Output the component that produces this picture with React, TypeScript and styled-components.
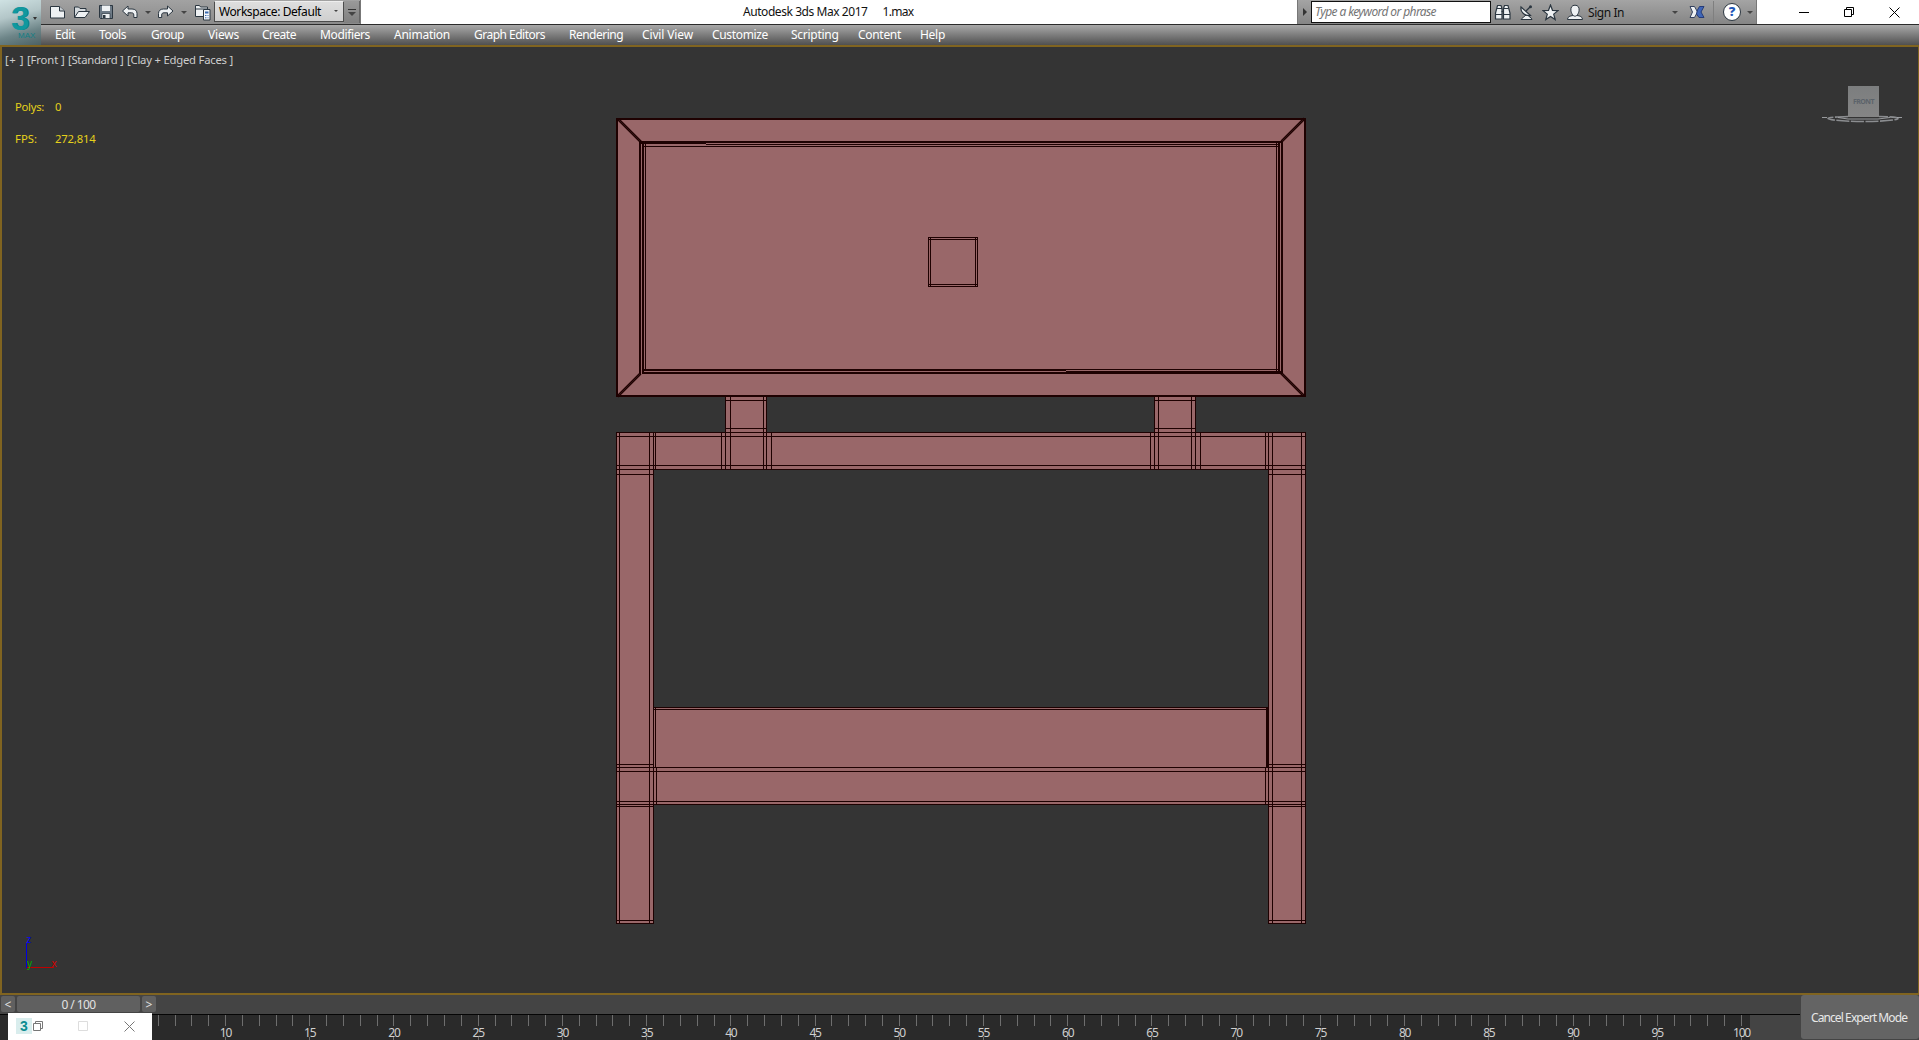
import React, { useLayoutEffect, useRef, useState } from "react";
import styled, { createGlobalStyle } from "styled-components";

const Global = createGlobalStyle`
  * { box-sizing: border-box; }
  html, body { margin: 0; padding: 0; overflow: hidden; background: #444; }
  body { font-family: "Noto Sans", "Open Sans", sans-serif; font-size: 12px; }
  svg { display: block; flex: none; }
`;

const Window = styled.div`
  width: 1919px;
  height: 1040px;
  display: flex;
  flex-direction: column;
  position: relative;
  overflow: hidden;
  background: #444;
`;

/* ---------- text fitted to a given width ---------- */

const FitText = styled.span`
  display: inline-block;
  white-space: pre;
`;

function Fit({ w, children }: { w: number; children: string }) {
  const ref = useRef<HTMLSpanElement>(null);
  const [spacing, setSpacing] = useState(0);
  useLayoutEffect(() => {
    if (ref.current) {
      const natural = ref.current.getBoundingClientRect().width;
      setSpacing((w - natural) / children.length);
    }
  }, []);
  return (
    <FitText ref={ref} style={{ letterSpacing: spacing }}>
      {children}
    </FitText>
  );
}

/* ---------- header ---------- */

const Header = styled.header`
  display: flex;
  height: 45px;
  flex: none;
`;

const AppButton = styled.div`
  width: 41px;
  height: 45px;
  flex: none;
  position: relative;
  background: linear-gradient(165deg, #cfe2e3 0%, #b3c6c8 35%, #6d8588 70%, #4c6164 100%);
`;

const Three = styled.span`
  position: absolute;
  left: 11px;
  top: 0;
  font: 700 33px/37px "Liberation Sans", sans-serif;
  color: #10989f;
  text-shadow: 1px 0 0 #0d7f88;
`;

const MaxTag = styled.span`
  position: absolute;
  left: 18px;
  top: 31px;
  font: 8px/9px "Liberation Sans", sans-serif;
  color: #137f86;
`;

const AppCaret = styled.span`
  position: absolute;
  left: 33px;
  top: 17px;
  border: 2.5px solid transparent;
  border-top: 3px solid #333;
`;

const Bars = styled.div`
  flex: 1;
  display: flex;
  flex-direction: column;
`;

const TitleBar = styled.div`
  height: 24px;
  display: flex;
  background: #fff;
`;

const QuickBar = styled.div`
  width: 320px;
  height: 24px;
  flex: none;
  display: flex;
  align-items: flex-start;
  padding-left: 7px;
  background: linear-gradient(#a2a2a2, #8b8b8b);
  border-right: 1px solid #777;
`;

const Slot = styled.div<{ $w: number }>`
  width: ${(p) => p.$w}px;
  height: 24px;
  flex: none;
  display: flex;
  align-items: center;
`;

const Caret = styled.i<{ $s?: number }>`
  width: 0;
  height: 0;
  border: ${(p) => p.$s ?? 3}px solid transparent;
  border-top-color: #444;
  border-bottom: 0;
`;

const Workspace = styled.div`
  width: 130px;
  height: 21px;
  margin-top: 1px;
  flex: none;
  display: flex;
  align-items: center;
  justify-content: space-between;
  padding: 0 5px 1px 4px;
  background: linear-gradient(#dedede, #cfcfcf);
  border: 1px solid #4c4c4c;
  border-top-color: #eee;
  color: #000;
`;

const Overflow = styled.div`
  width: 17px;
  height: 22px;
  margin-top: 1px;
  display: flex;
  flex-direction: column;
  align-items: center;
  justify-content: center;
  gap: 2px;
  background: linear-gradient(#999, #808080);
  border-right: 1px solid #666;
  &::before { content: ""; width: 8px; height: 1px; background: #333; }
`;

const Title = styled.div`
  flex: 1;
  display: flex;
  gap: 15px;
  padding: 3px 0 0 382px;
  line-height: 17px;
  color: #111;
`;

const InfoCenter = styled.div`
  width: 460px;
  height: 24px;
  flex: none;
  display: flex;
  background: linear-gradient(#a4a4a4, #858585);
  border: 1px solid #777;
  border-width: 0 1px;
`;

const Expand = styled.div`
  width: 13px;
  height: 24px;
  display: flex;
  align-items: center;
  justify-content: center;
  &::before { content: ""; border: 4px solid transparent; border-left: 4px solid #333; border-right: 0; }
`;

const Search = styled.div`
  width: 180px;
  height: 22px;
  margin-top: 1px;
  padding-left: 3px;
  flex: none;
  line-height: 19px;
  border: 1px solid #111;
  background: #fff;
  color: #757575;
  font-style: italic;
`;

const SignIn = styled.div`
  width: 84px;
  line-height: 25px;
  color: #111;
`;

const Divider = styled.div`
  width: 1px;
  height: 22px;
  margin: 1px 9px 0 0;
  background: #7f7f7f;
`;

const Controls = styled.div`
  width: 162px;
  height: 24px;
  display: flex;
  padding-left: 42px;
`;

const MenuBar = styled.nav`
  height: 21px;
  display: flex;
  padding-left: 14px;
  border-top: 1px solid #2b2b2b;
  background: linear-gradient(#a9a9a9, #505050);
  color: #fff;
  line-height: 20px;
`;

const MenuItem = styled.div<{ $w: number }>`
  width: ${(p) => p.$w}px;
  flex: none;
`;

/* ---------- viewport ---------- */

const Viewport = styled.main`
  height: 950px;
  flex: none;
  position: relative;
  border: 2px solid #806420;
  border-right-width: 1px;
  background: #343434;
`;

const ViewLabels = styled.div`
  display: flex;
  padding: 5px 0 0 3px;
  line-height: 16px;
  font-size: 11.3px;
  color: #cdcdcd;
`;

const ViewLabel = styled.div<{ $w: number }>`
  width: ${(p) => p.$w}px;
`;

const Stats = styled.div`
  display: grid;
  grid-template-columns: 40px 60px;
  justify-items: start;
  row-gap: 16px;
  padding: 31px 0 0 13px;
  line-height: 16px;
  font-size: 11.3px;
  color: #e5d11a;
`;

const Overlay = styled.svg<{ $x: number; $y: number }>`
  position: absolute;
  left: ${(p) => p.$x}px;
  top: ${(p) => p.$y}px;
`;

const ViewCube = styled.div`
  position: absolute;
  left: 1846px;
  top: 39px;
  width: 31px;
  height: 31px;
  background: linear-gradient(#7c7e7f, #858585);
  color: #5c636a;
  font: 700 7px/32px "Open Sans", sans-serif;
  text-align: center;
`;

/* ---------- timeline ---------- */

const Timeline = styled.footer`
  height: 45px;
  display: flex;
  background: #444;
`;

const Track = styled.div`
  width: 1800px;
`;

const SliderRow = styled.div`
  height: 19px;
  padding: 1px 0 0 1px;
  display: flex;
  color: #e2e2e2;
`;

const SliderButton = styled.div<{ $w: number; $gap: number }>`
  width: ${(p) => p.$w}px;
  height: 16px;
  margin-right: ${(p) => p.$gap}px;
  border-radius: 2px;
  background: #606060;
  text-align: center;
  line-height: 17px;
`;

const Ruler = styled.div`
  width: 1750px;
  height: 26px;
  display: flex;
  padding-left: 48.7px;
  background: #2a2a2a;
  box-shadow: 50px 0 0 #444;
  position: relative;
  &::before { content: ""; position: absolute; left: 0; top: 0; width: 1800px; height: 1px; background: #050505; }
`;

const Frame = styled.div`
  width: 16.858px;
  flex: none;
  display: flex;
  flex-direction: column;
  align-items: center;
  color: #cfcfcf;
`;

const Tick = styled.i<{ $h: number }>`
  width: 1px;
  height: ${(p) => p.$h}px;
  flex: none;
  background: #6e6e6e;
`;

const FrameNo = styled.span`
  height: 11px;
  line-height: 14px;
`;

const Expert = styled.button`
  width: 118px;
  height: 44px;
  margin: 0 0 0 1px;
  padding: 1px 2px 0 0;
  border: 0;
  border-radius: 3px;
  background: #646464;
  color: #e8e8e8;
  font: 12px "Noto Sans", sans-serif;
`;

const MiniWindow = styled.div`
  position: absolute;
  left: 8px;
  top: 1013px;
  width: 144px;
  height: 27px;
  display: flex;
  padding: 1px 0 0 8px;
  background: #fff;
`;

const MiniLogo = styled.div`
  width: 16px;
  height: 16px;
  background: #d9eded;
  color: #0c8c90;
  text-align: center;
  font: 700 14px/16px "Liberation Sans", sans-serif;
`;

/* ---------- icons ---------- */

const ink = "#2b3640";
const pale = "#eef1f3";

const NewIcon = () => (
  <svg width="18" height="14" viewBox="0 0 18 14">
    <path d="M2.5 1.5h9l5 4.5v7h-14z" fill={pale} stroke={ink} />
    <path d="M11.5 1.5v4.5h5" fill="#c5cbd0" stroke={ink} />
  </svg>
);
const OpenIcon = () => (
  <svg width="18" height="14" viewBox="0 0 18 14">
    <path d="M1.5 12.5v-10.5h4l1.5 1.5h6v3" fill="#d5dade" stroke={ink} />
    <path d="M1.5 12.5l4-6h11l-4.5 6z" fill={pale} stroke={ink} />
  </svg>
);
const SaveIcon = () => (
  <svg width="14" height="14" viewBox="0 0 14 14">
    <path d="M.5.5h13v13h-12l-1-1z" fill="#6d7a86" stroke={ink} />
    <path d="M3 .5h8v5.5h-8z" fill={pale} />
    <path d="M3 8.5h8v5h-8z" fill={pale} stroke={ink} strokeWidth=".7" />
    <path d="M4 10h2.5v3h-2.5z" fill={ink} />
  </svg>
);
const UndoIcon = ({ flip }: { flip?: boolean }) => (
  <svg width="17" height="14" viewBox="0 0 17 14">
    <path
      transform={flip ? "translate(16 0) scale(-1 1)" : "translate(-.5 0)"}
      d="M1 6L6.5 1v3h4c3.500 0 5 2 5 4.500v4h-3.200v-2.500c0-1.500-.8-2.200-2.300-2.200h-3.500v3.200z"
      fill={pale}
      stroke={ink}
    />
  </svg>
);
const ProjectIcon = () => (
  <svg width="18" height="17" viewBox="0 0 18 17">
    <path d="M1.5 12.5v-11h4l1 1.5h7v9.5z" fill={pale} stroke={ink} />
    <path d="M1.5 5h12" stroke={ink} />
    <path d="M9.500 5.500h6.500v10.500h-6.500z" fill="#f5f7fa" stroke={ink} />
    <path d="M11 7.500h3.500v2h-3.500z" fill="#3769b0" />
    <path d="M11 11.500h1.500M13.500 11.500h1M11 13.800h1.500M13.500 13.800h1" stroke="#3769b0" />
  </svg>
);
const BinocularsIcon = () => (
  <svg width="18" height="17" viewBox="0 0 18 17">
    <path
      d="M3.500 1.500h3.500l1 3v10.500h-6.500v-6zM14 1.500h-3.500l-1 3v10.500h6.500v-6z"
      fill={pale}
      stroke={ink}
      strokeWidth="1.200"
    />
    <path d="M1.500 10.500h6.500M9.500 10.500h6.500M3 4.500h5M9.500 4.500h5M7.500 7.500h2.500" stroke={ink} />
  </svg>
);
const DishIcon = () => (
  <svg width="16" height="17" viewBox="0 0 16 17">
    <path d="M2 15.500h11c-1-2.500-3-2.500-4-4l-3 0c0 1.500-3 2-4 4z" fill={pale} stroke={ink} />
    <path d="M2 3c-1 5 4 9.500 9.500 8.500z" fill={pale} stroke={ink} strokeWidth="1.200" />
    <path d="M7 7l4-4" stroke={ink} strokeWidth="1.300" />
    <circle cx="11.500" cy="2.800" r="1.500" fill={ink} />
  </svg>
);
const StarIcon = () => (
  <svg width="17" height="17" viewBox="0 0 17 17">
    <path d="M8.500 1l2 5.300 5.500.3-4.300 3.500 1.500 5.400-4.700-3.100-4.700 3.100 1.500-5.400L1 6.600l5.500-.3z" fill={pale} stroke={ink} strokeWidth="1.200" />
  </svg>
);
const UserIcon = () => (
  <svg width="18" height="17" viewBox="0 0 18 17">
    <path d="M1.500 15.500c0-3 2.500-3.500 5.500-4l4 0c3 .5 5.500 1 5.500 4z" fill={pale} stroke={ink} />
    <path d="M9 1.200c3.200 0 4.300 2.300 4.100 5-.2 2.800-2 6-4.100 6s-3.900-3.200-4.100-6c-.2-2.700.9-5 4.100-5z" fill={pale} stroke={ink} />
  </svg>
);
const ExchangeIcon = () => (
  <svg width="16" height="14" viewBox="0 0 16 14">
    <path d="M1 1.500h4.500l3 5.500-3 5.500h-4.500l2.500-5.500z" fill={pale} stroke="#33415f" />
    <path d="M15 1.500h-4.500l-2 3.500-1 4 2.500 3.500h5l-3-5.500z" fill="#3f66b8" stroke="#263c78" />
  </svg>
);

const QuestionMark = styled.div`
  width: 18px;
  height: 18px;
  border: 1.5px solid #2b3640;
  border-radius: 50%;
  background: #fff;
  color: #2157b8;
  text-align: center;
  font: 800 13px/15px "Open Sans", sans-serif;
`;

const Minimize = () => (
  <svg width="10" height="10"><path d="M0 5.5h10" stroke="#000" /></svg>
);
const Restore = ({ c = "#000" }: { c?: string }) => (
  <svg width="11" height="11">
    <path d="M.5 2.5h7v7h-7zM2.5 2.5v-2h7v7h-2" fill="none" stroke={c} />
  </svg>
);
const Close = ({ c = "#000" }: { c?: string }) => (
  <svg width="11" height="11"><path d="M.5.5l10 10M10.5.5l-10 10" stroke={c} /></svg>
);

/* ---------- model wireframe ---------- */

type Seg = [number, number, number];
const hs: Seg[] = [
  [400, 725, 766], [428, 725, 766], [400, 1154, 1195], [428, 1154, 1195],
  [432, 616, 1305], [436, 616, 1305], [465, 616, 1305], [469, 616, 1305],
  [474, 616, 653], [474, 1268, 1305],
  [707, 653, 1268], [709, 653, 1268],
  [767, 616, 1305], [771, 616, 1305], [801, 616, 1305], [804, 616, 1305],
  ...[764, 806, 920, 923].flatMap((y): Seg[] => [[y, 616, 653], [y, 1268, 1305]]),
  [146, 643, 1278], [144, 706, 1278],
  [237, 928, 977], [239, 928, 977], [284, 928, 977], [286, 928, 977],
];
const vs: Seg[] = [
  ...[616, 619, 649, 653, 1268, 1272, 1301, 1305].map((x): Seg => [x, 432, 923]),
  ...[725, 730, 763, 766, 1154, 1158, 1191, 1195].map((x): Seg => [x, 396, 469]),
  ...[655, 721, 771, 1150, 1200, 1265].map((x): Seg => [x, 432, 469]),
  [655, 707, 767], [656, 767, 804], [1265, 767, 804],
  [645, 143, 370], [1276, 143, 370],
  [928, 237, 286], [930, 237, 286], [975, 237, 286], [977, 237, 286],
];
const fills = [
  [616, 118, 690, 279], [725, 396, 42, 40], [1154, 396, 42, 40],
  [616, 432, 690, 38], [616, 432, 38, 492], [1268, 432, 38, 492],
  [653, 707, 616, 98],
];
const thick = [
  [616, 118, 690, 2], [616, 395, 690, 2], [616, 118, 2, 279], [1304, 118, 2, 279],
  [639, 141, 2, 233], [642, 141, 2, 232], [1278, 141, 2, 232], [1281, 141, 2, 233],
  [639, 141, 644, 2], [639, 143, 67, 1],
  [642, 369, 424, 2], [642, 372, 424, 2], [1066, 369, 213, 1], [1066, 371, 216, 3],
  [1266, 707, 3, 60],
];

const Model = () => (
  <Overlay $x={608} $y={63} width="710" height="830" viewBox="610 110 710 830" shapeRendering="crispEdges">
    {fills.map(([x, y, w, h], i) => <rect key={i} x={x} y={y} width={w} height={h} fill="#996769" />)}
    <g fill="#1e0101">
      {hs.map(([y, a, b], i) => <rect key={i} x={a} y={y} width={b - a + 1} height="1" />)}
      {vs.map(([x, a, b], i) => <rect key={i} x={x} y={a} width="1" height={b - a + 1} />)}
      {thick.map(([x, y, w, h], i) => <rect key={i} x={x} y={y} width={w} height={h} />)}
    </g>
    <path
      d="M617 119l23 23M619 119l23 23M617 396l23 -23M618 397l23 -23M1305 119l-23 23M1304 118l-23 23M1305 396l-23 -23M1303 396l-23 -23"
      stroke="#1e0101"
      strokeWidth="1.2"
      shapeRendering="auto"
    />
  </Overlay>
);

const menus: [string, number, number][] = [
  ["Edit", 20, 44], ["Tools", 27, 52], ["Group", 33, 57], ["Views", 31, 54],
  ["Create", 34, 58], ["Modifiers", 50, 74], ["Animation", 56, 80], ["Graph Editors", 71, 95],
  ["Rendering", 54, 73], ["Civil View", 51, 70], ["Customize", 56, 79], ["Scripting", 47.5, 67],
  ["Content", 43, 62], ["Help", 25, 40],
];

export default function App() {
  return (
    <Window>
      <Global />
      <Header>
        <AppButton>
          <Three>3</Three>
          <MaxTag>MAX</MaxTag>
          <AppCaret />
        </AppButton>
        <Bars>
          <TitleBar>
            <QuickBar>
              <Slot $w={25}><NewIcon /></Slot>
              <Slot $w={26}><OpenIcon /></Slot>
              <Slot $w={23}><SaveIcon /></Slot>
              <Slot $w={23}><UndoIcon /></Slot>
              <Slot $w={13}><Caret $s={3} /></Slot>
              <Slot $w={23}><UndoIcon flip /></Slot>
              <Slot $w={13}><Caret $s={3} /></Slot>
              <Slot $w={20}><ProjectIcon /></Slot>
              <Workspace><Fit w={102}>Workspace: Default</Fit><Caret $s={2} /></Workspace>
              <Overflow><Caret $s={4} /></Overflow>
            </QuickBar>
            <Title><Fit w={124.5}>Autodesk 3ds Max 2017</Fit><Fit w={31}>1.max</Fit></Title>
            <InfoCenter>
              <Expand />
              <Search><Fit w={121}>Type a keyword or phrase</Fit></Search>
              <Slot $w={3} />
              <Slot $w={25}><BinocularsIcon /></Slot>
              <Slot $w={23}><DishIcon /></Slot>
              <Slot $w={24}><StarIcon /></Slot>
              <Slot $w={22}><UserIcon /></Slot>
              <SignIn><Fit w={36}>Sign In</Fit></SignIn>
              <Slot $w={17}><Caret /></Slot>
              <Slot $w={24}><ExchangeIcon /></Slot>
              <Divider />
              <Slot $w={24}><QuestionMark>?</QuestionMark></Slot>
              <Slot $w={8}><Caret /></Slot>
            </InfoCenter>
            <Controls>
              <Slot $w={45}><Minimize /></Slot>
              <Slot $w={45}><Restore /></Slot>
              <Slot $w={20}><Close /></Slot>
            </Controls>
          </TitleBar>
          <MenuBar>
            {menus.map(([name, w, slot]) => (
              <MenuItem key={name} $w={slot}><Fit w={w}>{name}</Fit></MenuItem>
            ))}
          </MenuBar>
        </Bars>
      </Header>

      <Viewport>
        <ViewLabels>
          <ViewLabel $w={22}><Fit w={19}>[+ ]</Fit></ViewLabel>
          <ViewLabel $w={41}><Fit w={37.5}>[Front ]</Fit></ViewLabel>
          <ViewLabel $w={59}><Fit w={55.5}>[Standard ]</Fit></ViewLabel>
          <ViewLabel $w={120}><Fit w={106}>[Clay + Edged Faces ]</Fit></ViewLabel>
        </ViewLabels>
        <Stats>
          <Fit w={29}>Polys:</Fit><Fit w={7}>0</Fit>
          <Fit w={22}>FPS:</Fit><Fit w={40.5}>272,814</Fit>
        </Stats>
        <Model />
        <Overlay $x={1818} $y={65} width="86" height="14" viewBox="1820 112 86 14">
          <path d="M1848 116.500c-10 .3-20 .8-20 2s14 3 35 3 35-1.500 35-3-9-1.800-19-2" fill="none" stroke="#8b8d90" strokeWidth="1.600" strokeDasharray="13 1.500" />
          <path d="M1822 117.500h5M1897 117.500h5M1838 117.500l10 1.500h30l12-1.500" fill="none" stroke="#a5a7aa" strokeWidth=".9" />
        </Overlay>
        <ViewCube><Fit w={21}>FRONT</Fit></ViewCube>
        <Overlay $x={20} $y={885} width="50" height="40" viewBox="22 932 50 40" fontFamily="Noto Sans, sans-serif" fontSize="10">
          <path d="M26.500 943v25" stroke="#0000e0" shapeRendering="crispEdges" />
          <path d="M27 967.500h27" stroke="#c00000" shapeRendering="crispEdges" />
          <text x="26.500" y="943" fill="#0000ff">z</text>
          <text x="27" y="967" fill="#00b000">y</text>
          <text x="51.500" y="967" fill="#d80000">x</text>
        </Overlay>
      </Viewport>

      <Timeline>
        <Track>
          <SliderRow>
            <SliderButton $w={14} $gap={2}>&lt;</SliderButton>
            <SliderButton $w={123} $gap={2}><Fit w={34}>0 / 100</Fit></SliderButton>
            <SliderButton $w={14} $gap={0}>&gt;</SliderButton>
          </SliderRow>
          <Ruler>
            {Array.from({ length: 101 }, (_, f) => (
              <Frame key={f}>
                <Tick $h={12} />
                {f % 5 === 0 && (
                  <>
                    <FrameNo><Fit w={String(f).length * 5.7}>{String(f)}</Fit></FrameNo>
                    <Tick $h={3} />
                  </>
                )}
              </Frame>
            ))}
          </Ruler>
        </Track>
        <Expert><Fit w={96}>Cancel Expert Mode</Fit></Expert>
      </Timeline>

      <MiniWindow>
        <Slot $w={17}><MiniLogo>3</MiniLogo></Slot>
        <Slot $w={45}><Restore c="#777" /></Slot>
        <Slot $w={46}><svg width="10" height="10"><path d="M.5.5h9v9h-9z" fill="none" stroke="#ddd" /></svg></Slot>
        <Slot $w={12}><Close c="#777" /></Slot>
      </MiniWindow>
    </Window>
  );
}
